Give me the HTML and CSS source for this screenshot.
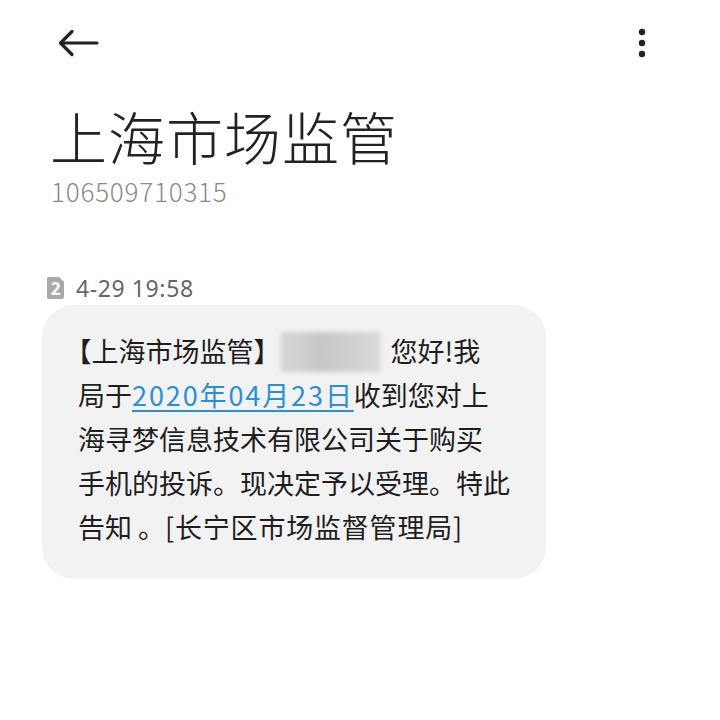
FILE: index.html
```html
<!DOCTYPE html>
<html lang="zh-CN">
<head>
<meta charset="utf-8">
<link rel="stylesheet" href="styles.css">
</head>
<body>
<div class="page">
  <header class="topbar">
    <svg class="back" width="42" height="28" viewBox="0 0 42 28">
      <path d="M40 14 H4 M15 2.5 L3.5 14 L15 25.5" fill="none" stroke="#222" stroke-width="3.2" stroke-linecap="round" stroke-linejoin="round"/>
    </svg>
    <svg class="more" width="10" height="30" viewBox="0 0 10 30">
      <circle cx="5" cy="4" r="3.2" fill="#222"/>
      <circle cx="5" cy="15" r="3.2" fill="#222"/>
      <circle cx="5" cy="26" r="3.2" fill="#222"/>
    </svg>
  </header>
  <h1 class="title">上海市场监管</h1>
  <div class="number">106509710315</div>
  <div class="meta"><span class="sim">2</span><span class="time">4-29 19:58</span></div>
  <div class="bubble">
    <div class="line"><span class="lb">【</span>上海市场监管】<span class="blur"></span>&nbsp;您好!我</div>
    <div class="line">局于<a class="link">2020年04月23日</a>收到您对上</div>
    <div class="line">海寻梦信息技术有限公司关于购买</div>
    <div class="line">手机的投诉。现决定予以受理。特此</div>
    <div class="line">告知&nbsp;。<span class="sq">[长宁区市场监督管理局]</span></div>
  </div>
</div>
</body>
</html>
```
FILE: styles.css
```css
html, body {
  margin: 0;
  padding: 0;
  background: #ffffff;
}
.page {
  width: 720px;
  height: 720px;
  box-sizing: border-box;
  padding: 0 0 0 42px;
  font-family: "Noto Sans CJK SC", "Noto Sans", sans-serif;
  color: #222;
}
.topbar {
  display: flex;
  justify-content: space-between;
  align-items: center;
  height: 28px;
  padding: 29px 73px 0 15px;
}
.back { display: block; }
.more { display: block; }
.title {
  margin: 46px 0 0 8px;
  font-size: 57px;
  font-weight: 300;
  line-height: 64px;
  letter-spacing: 1px;
  color: #222;
}
.number {
  margin: 9px 0 0 9px;
  font-size: 26px;
  font-weight: 300;
  line-height: 30px;
  color: #8a8a8a;
  letter-spacing: 0.8px;
}
.meta {
  display: flex;
  align-items: center;
  margin: 70px 0 0 5px;
  height: 24px;
}
.sim {
  display: inline-flex;
  align-items: center;
  justify-content: center;
  width: 17px;
  height: 22px;
  background: #a9a9a9;
  color: #fff;
  font-size: 17px;
  font-weight: 700;
  border-radius: 2px;
  clip-path: polygon(0 0, 70% 0, 100% 22%, 100% 100%, 0 100%);
  margin-right: 12px;
  font-family: "Noto Sans", sans-serif;
}
.time {
  font-size: 23px;
  color: #666;
  font-family: "Noto Sans", sans-serif;
  letter-spacing: 0.6px;
}
.bubble {
  margin-top: 5px;
  width: 504px;
  box-sizing: border-box;
  padding: 24px 0 30px 36px;
  background: #f2f2f2;
  border-radius: 32px;
}
.line {
  font-size: 27px;
  line-height: 44px;
  white-space: nowrap;
  color: #1e1e1e;
}
.lb {
  font-feature-settings: "halt" 1;
}
.blur {
  display: inline-block;
  width: 100px;
  height: 40px;
  vertical-align: -10px;
  background: linear-gradient(90deg, #d6d6d6, #c8c8c8 40%, #cfcfcf 70%, #dadada);
  filter: blur(2px);
  margin-right: 4px;
}
.link {
  color: #2b8fd3;
  text-decoration: underline;
  text-decoration-thickness: 2px;
  text-underline-offset: 4px;
  letter-spacing: 1.9px;
}
.sq {
  letter-spacing: 0.8px;
}
```
